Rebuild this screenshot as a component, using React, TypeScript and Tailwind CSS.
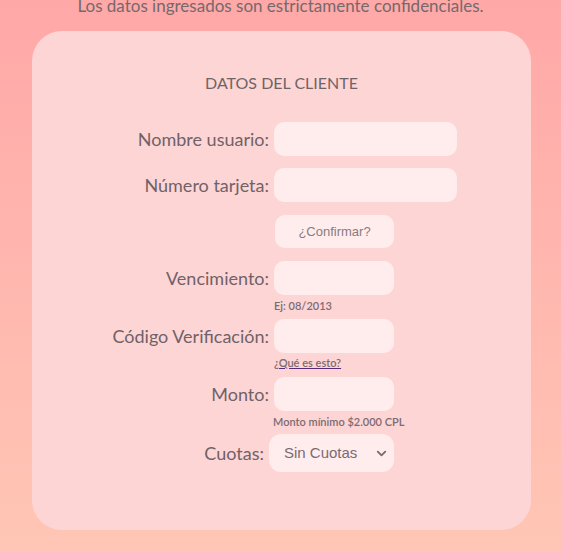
import { ChevronDown } from "lucide-react";

const label = "w-[242px] shrink-0 text-right text-[18px] text-[#6f6268] pr-[5px]";
const field = "h-[34px] rounded-[10px] bg-[#ffeded] outline-none border-0 px-3";

const App = () => {
  return (
    <div className="min-h-[551px] w-full bg-gradient-to-b from-[#ffa8a8] to-[#ffc6b5] font-['Lato','Open_Sans',sans-serif] overflow-hidden">
      <p className="text-center text-[17px] text-[#76686b] -mt-[5px] leading-[22px]">
        Los datos ingresados son estrictamente confidenciales.
      </p>

      <div className="ml-[32px] mr-[30px] mt-[14px] h-[499px] rounded-[30px] bg-[#fed5d5] pt-[42px]">
        <h2 className="text-center text-[16px] text-[#6e6465] leading-[20px]">DATOS DEL CLIENTE</h2>

        <div className="mt-[29px] flex flex-col">
          <div className="flex items-center">
            <span className={label}>Nombre usuario:</span>
            <input className={`${field} w-[183px]`} />
          </div>

          <div className="flex items-center mt-[12px]">
            <span className={label}>Número tarjeta:</span>
            <input className={`${field} w-[183px]`} />
          </div>

          <div className="flex items-center mt-[13px]">
            <span className="w-[243px] shrink-0" />
            <button className="h-[33px] w-[119px] rounded-[10px] bg-[#ffeded] text-[13px] text-[#8a7b80] font-['Liberation_Sans',Arial,sans-serif]">
              ¿Confirmar?
            </button>
          </div>

          <div className="flex items-center mt-[13px]">
            <span className={label}>Vencimiento:</span>
            <input className={`${field} w-[120px]`} />
          </div>
          <div className="pl-[242px] text-[11px] font-semibold text-[#7b6c72] leading-[14px] mt-[4px]">
            Ej: 08/2013
          </div>

          <div className="flex items-center mt-[6px]">
            <span className={label}>Código Verificación:</span>
            <input className={`${field} w-[120px]`} />
          </div>
          <div className="pl-[242px] text-[11px] font-semibold leading-[14px] mt-[3px]">
            <a href="#" className="text-[#7b6c72] underline decoration-[#5b2a7a]">¿Qué es esto?</a>
          </div>

          <div className="flex items-center mt-[7px]">
            <span className={label}>Monto:</span>
            <input className={`${field} w-[120px]`} />
          </div>
          <div className="pl-[241px] text-[11px] font-semibold text-[#7b6c72] leading-[14px] mt-[4px]">
            Monto mínimo $2.000 CPL
          </div>

          <div className="flex items-center mt-[5px]">
            <span className="w-[237px] shrink-0 text-right text-[18px] text-[#6f6268] pr-[5px]">Cuotas:</span>
            <div className="relative">
              <select className="h-[38px] w-[125px] appearance-none rounded-[12px] bg-[#ffeded] pl-[15px] text-[15px] text-[#7b6a70] outline-none font-['Liberation_Sans',Arial,sans-serif]">
                <option>Sin Cuotas</option>
              </select>
              <ChevronDown className="pointer-events-none absolute right-[5px] top-[12px] text-[#7b6a70]" size={15} strokeWidth={3} />
            </div>
          </div>
        </div>
      </div>
    </div>
  );
};

export default App;
